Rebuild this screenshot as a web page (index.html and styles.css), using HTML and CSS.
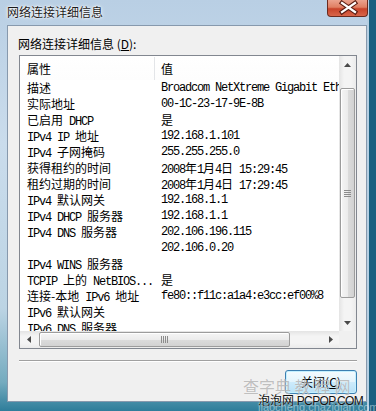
FILE: index.html
```html
<!DOCTYPE html>
<html lang="zh-CN">
<head>
  <meta charset="UTF-8">
  <title>网络连接详细信息</title>
  <link rel="stylesheet" href="styles.css">
</head>
<body>
  <div class="window">
    <div class="titlebar">
      <span class="title">网络连接详细信息</span>
      <div class="close">
        <svg width="41" height="17" viewBox="0 0 41 17">
          <path d="M14 4 L27 13 M27 4 L14 13" stroke="#5b1d12" stroke-width="4.5" stroke-linecap="square"/>
          <path d="M14 4 L27 13 M27 4 L14 13" stroke="#fff" stroke-width="2.2" stroke-linecap="square"/>
        </svg>
      </div>
    </div>

    <div class="client">
      <div class="label">网络连接详细信息 (<u>D</u>):</div>

      <div class="listbox">
        <div class="table">
          <div class="head">
            <div class="k">属性</div>
            <div class="v">值</div>
          </div>
          <div class="row"><span class="k"><span class="zh">描述</span></span><span class="v">Broadcom NetXtreme Gigabit Ethernet</span></div>
          <div class="row"><span class="k"><span class="zh">实际地址</span></span><span class="v">00-1C-23-17-9E-8B</span></div>
          <div class="row"><span class="k"><span class="zh">已启用</span> DHCP</span><span class="v"><span class="zh">是</span></span></div>
          <div class="row"><span class="k">IPv4 IP <span class="zh">地址</span></span><span class="v">192.168.1.101</span></div>
          <div class="row"><span class="k">IPv4 <span class="zh">子网掩码</span></span><span class="v">255.255.255.0</span></div>
          <div class="row"><span class="k"><span class="zh">获得租约的时间</span></span><span class="v">2008<span class="zh">年</span>1<span class="zh">月</span>4<span class="zh">日</span> 15:29:45</span></div>
          <div class="row"><span class="k"><span class="zh">租约过期的时间</span></span><span class="v">2008<span class="zh">年</span>1<span class="zh">月</span>4<span class="zh">日</span> 17:29:45</span></div>
          <div class="row"><span class="k">IPv4 <span class="zh">默认网关</span></span><span class="v">192.168.1.1</span></div>
          <div class="row"><span class="k">IPv4 DHCP <span class="zh">服务器</span></span><span class="v">192.168.1.1</span></div>
          <div class="row"><span class="k">IPv4 DNS <span class="zh">服务器</span></span><span class="v">202.106.196.115</span></div>
          <div class="row"><span class="k"></span><span class="v">202.106.0.20</span></div>
          <div class="row"><span class="k">IPv4 WINS <span class="zh">服务器</span></span><span class="v"></span></div>
          <div class="row"><span class="k">TCPIP <span class="zh">上的</span> NetBIOS...</span><span class="v"><span class="zh">是</span></span></div>
          <div class="row"><span class="k"><span class="zh">连接-本地</span> IPv6 <span class="zh">地址</span></span><span class="v">fe80::f11c:a1a4:e3cc:ef00%8</span></div>
          <div class="row"><span class="k">IPv6 <span class="zh">默认网关</span></span><span class="v"></span></div>
          <div class="row"><span class="k">IPv6 DNS <span class="zh">服务器</span></span><span class="v"></span></div>
        </div>

        <div class="vscroll">
          <div class="arrow"><svg width="7" height="4"><polygon points="3.5,0 7,4 0,4" fill="#4a4a4a"/></svg></div>
          <div class="track">
            <div class="thumb">
              <svg width="7" height="7"><rect x="0" y="0" width="7" height="1" fill="#8c8c8c"/><rect x="0" y="2" width="7" height="1" fill="#8c8c8c"/><rect x="0" y="4" width="7" height="1" fill="#8c8c8c"/><rect x="0" y="6" width="7" height="1" fill="#8c8c8c"/></svg>
            </div>
          </div>
          <div class="arrow"><svg width="7" height="4"><polygon points="0,0 7,0 3.5,4" fill="#4a4a4a"/></svg></div>
        </div>

        <div class="hscroll">
          <div class="arrow"><svg width="4" height="7"><polygon points="0,3.5 4,0 4,7" fill="#4a4a4a"/></svg></div>
          <div class="track">
            <div class="thumb">
              <svg width="7" height="7"><rect x="0" y="0" width="1" height="7" fill="#8c8c8c"/><rect x="2" y="0" width="1" height="7" fill="#8c8c8c"/><rect x="4" y="0" width="1" height="7" fill="#8c8c8c"/><rect x="6" y="0" width="1" height="7" fill="#8c8c8c"/></svg>
            </div>
          </div>
          <div class="arrow"><svg width="4" height="7"><polygon points="0,0 4,3.5 0,7" fill="#4a4a4a"/></svg></div>
        </div>

        <div class="corner"></div>
      </div>

      <div class="sep"></div>

      <div class="buttons">
        <button class="btn">关闭(<u>C</u>)</button>
      </div>
    </div>

    <div class="mark-gray">查字典 <span class="wide">教程网</span></div>
    <div class="mark-black">泡泡网 <span class="latin">PCPOP.COM</span></div>
    <div class="mark-white">jiaocheng.chazidian.com</div>
  </div>
</body>
</html>
```

FILE: styles.css
```css
* {
  box-sizing: border-box;
}

body {
  margin: 0;
  background-color: #1d6585;
  font-family: "Noto Sans CJK SC", sans-serif;
  font-size: 12px;
  color: #000;
}

.window {
  position: relative;
  width: 376px;
  height: 411px;
  padding: 0 9px 9px 7px;
  overflow: hidden;
  background:
    linear-gradient(to right, transparent 367px, #b6cfe2 367px, #b6cfe2 369px, #1a5f80 369px),
    linear-gradient(to bottom, #b9cfe4 0%, #cadcec 35%, #bcd4e4 75%, #74abbf 93%, #2e7d9a 100%);
}

/* title bar */
.titlebar {
  height: 25px;
  display: flex;
  justify-content: space-between;
  align-items: flex-start;
  margin-right: -1px;
}

.title {
  padding-top: 4px;
  line-height: 16px;
  font-size: 12px;
  color: #1a1a1a;
  text-shadow: 0 0 4px #fff, 0 0 2px #fff, 0 0 1px #fff;
}

.close {
  width: 41px;
  height: 17px;
  border: 1px solid #6b2a1e;
  border-top: none;
  border-radius: 0 0 4px 4px;
  background: linear-gradient(to bottom, #eba38f 0%, #e07f63 45%, #c8432a 55%, #d8664a 100%);
}

.close svg {
  display: block;
  margin-top: -1px;
}

/* client area */
.client {
  width: 360px;
  height: 377px;
  padding: 10px 9px 7px 11px;
  background-color: #f0f0f0;
  border: 1px solid #8799ad;
}

.label {
  line-height: 16px;
  margin-bottom: 3px;
  margin-left: -1px;
}

.listbox {
  width: 338px;
  height: 294px;
  border: 1px solid #828790;
  background-color: #fff;
  display: grid;
  grid-template-columns: 1fr 17px;
  grid-template-rows: 1fr 17px;
}

.table {
  overflow: hidden;
}

.head {
  display: flex;
  height: 24px;
  line-height: 24px;
  padding-top: 1px;
  background: linear-gradient(to bottom, #fff, #fdfdfd);
}

.head .k {
  width: 135px;
  padding-left: 7px;
  border-right: 1px solid #e3e5e8;
}

.head .v {
  padding-left: 6px;
}

.row {
  display: flex;
  height: 16px;
  white-space: nowrap;
  font-family: "Liberation Mono", monospace;
  font-size: 12px;
  letter-spacing: -1.2px;
  line-height: 16px;
}

.row .k {
  flex: none;
  width: 135px;
  padding-left: 7px;
  overflow: hidden;
}

.row .v {
  padding-left: 6px;
}

.zh {
  font-family: "Noto Sans CJK SC", sans-serif;
  font-size: 12px;
  letter-spacing: 0;
  line-height: 16px;
}

/* scrollbars */
.vscroll {
  display: flex;
  flex-direction: column;
  background: linear-gradient(to right, #e4e4e4, #f4f4f4 30%, #f4f4f4 70%, #ebebeb);
}

.hscroll {
  display: flex;
  background: linear-gradient(to bottom, #e4e4e4, #f4f4f4 30%, #f4f4f4 70%, #ebebeb);
}

.arrow {
  flex: none;
  width: 17px;
  height: 17px;
  display: flex;
  align-items: center;
  justify-content: center;
}

.vscroll .track {
  flex: 1;
  padding: 15px 0 0 1px;
}

.vscroll .thumb {
  width: 15px;
  height: 210px;
  border: 1px solid #9c9c9c;
  border-radius: 2px;
  background: linear-gradient(to right, #f5f5f5, #ececec 50%, #dcdcdc 51%, #d2d2d2);
  box-shadow: inset 1px 1px 0 #fff;
  display: flex;
  align-items: center;
  justify-content: center;
}

.hscroll .track {
  flex: 1;
  padding: 1px 0 0 2px;
}

.hscroll .thumb {
  width: 251px;
  height: 15px;
  border: 1px solid #9c9c9c;
  border-radius: 2px;
  background: linear-gradient(to bottom, #f5f5f5, #ececec 50%, #dcdcdc 51%, #d2d2d2);
  box-shadow: inset 1px 1px 0 #fff;
  display: flex;
  align-items: center;
  justify-content: center;
}

.thumb svg {
  display: block;
}

.corner {
  background-color: #f0f0f0;
}

.sep {
  width: 338px;
  height: 2px;
  margin-top: 11px;
  border-top: 1px solid #a0a0a0;
  border-bottom: 1px solid #fff;
}

.buttons {
  width: 338px;
  margin-top: 8px;
  display: flex;
  justify-content: flex-end;
}

.btn {
  width: 72px;
  height: 24px;
  padding: 0;
  border: 1px solid #3c7fb1;
  border-radius: 3px;
  background: linear-gradient(to bottom, #f4fbfe, #e3f4fc 50%, #cdebfb 51%, #b8e1f7);
  box-shadow: inset 0 0 0 1px #c4f0ff;
  font-family: "Noto Sans CJK SC", sans-serif;
  font-size: 12px;
  line-height: 20px;
  color: #000;
}

/* watermark over the corner */
.mark-gray {
  position: absolute;
  left: 243px;
  top: 376px;
  font-size: 16px;
  line-height: 20px;
  color: rgba(140, 140, 140, 0.55);
  text-shadow: 0 0 1px rgba(255, 255, 255, 0.8);
  white-space: nowrap;
}

.mark-gray .wide {
  letter-spacing: 4px;
}

.mark-black {
  position: absolute;
  left: 258px;
  top: 393px;
  font-size: 12px;
  line-height: 14px;
  color: #111;
  white-space: nowrap;
  text-shadow: 0 0 2px #fff;
}

.mark-black .latin {
  font-family: "Liberation Sans", sans-serif;
  letter-spacing: -0.6px;
}

.mark-white {
  position: absolute;
  left: 258px;
  top: 402px;
  font-family: "Liberation Sans", sans-serif;
  font-size: 11px;
  line-height: 11px;
  color: rgba(220, 235, 240, 0.55);
  white-space: nowrap;
}
```
